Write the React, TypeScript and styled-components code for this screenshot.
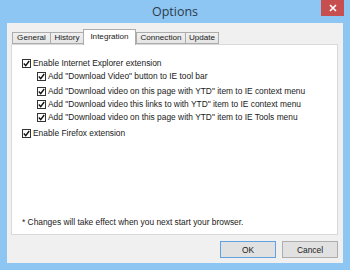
import React from 'react';
import styled, { createGlobalStyle } from 'styled-components';

const GlobalStyle = createGlobalStyle`
  html, body {
    margin: 0;
    padding: 0;
    background: #8ec6f3;
  }
`;

const Frame = styled.div`
  width: 350px;
  height: 270px;
  background: #8ec6f3;
  display: flex;
  flex-direction: column;
  font-family: 'Liberation Sans', Arial, sans-serif;
  font-size: 8.4px;
  color: #1a1a1a;
`;

const TitleBar = styled.div`
  height: 23px;
  flex: none;
  display: grid;
  grid-template-columns: 1fr auto 1fr;
  align-items: start;
`;

const Title = styled.div`
  grid-column: 2;
  font-family: 'Open Sans', 'Noto Sans', sans-serif;
  font-size: 12.5px;
  color: #2c3a4a;
  line-height: 24px;
`;

const CloseButton = styled.div`
  grid-column: 3;
  justify-self: end;
  margin-right: 6px;
  width: 23px;
  height: 16px;
  background: #c74f50;
  display: flex;
  align-items: center;
  justify-content: center;
`;

const Client = styled.div`
  margin: 0 7px;
  height: 240px;
  flex: none;
  background: #f0f0f0;
  padding: 6px 5px 0 4px;
  box-sizing: border-box;
  display: flex;
  flex-direction: column;
`;

const TabStrip = styled.div`
  height: 15px;
  flex: none;
  display: flex;
  align-items: flex-end;
  padding-left: 1px;
  position: relative;
  z-index: 1;
`;

const Tab = styled.div<{ $w: number; $active?: boolean }>`
  width: ${(p) => p.$w}px;
  height: ${(p) => (p.$active ? 16 : 12)}px;
  box-sizing: border-box;
  border: 1px solid #acacac;
  border-bottom: ${(p) => (p.$active ? 'none' : '1px solid #acacac')};
  margin-bottom: ${(p) => (p.$active ? -1 : 0)}px;
  margin-right: ${(p) => (p.$active ? 0 : -1)}px;
  background: ${(p) => (p.$active ? '#ffffff' : 'linear-gradient(#f0f0f0, #e5e5e5)')};
  display: flex;
  justify-content: center;
  align-items: ${(p) => (p.$active ? 'flex-start' : 'center')};
  padding-top: ${(p) => (p.$active ? 2 : 0)}px;
  font-size: 8.1px;
  line-height: 10px;
  white-space: nowrap;
`;

const Panel = styled.div`
  height: 191px;
  flex: none;
  box-sizing: border-box;
  background: #ffffff;
  border: 1px solid #d9d9d9;
  padding: 13px 0 0 10px;
  display: flex;
  flex-direction: column;
`;

const Row = styled.label<{ $indent?: boolean; $gap: number }>`
  display: flex;
  align-items: center;
  gap: 2px;
  margin-left: ${(p) => (p.$indent ? 15 : 0)}px;
  margin-bottom: ${(p) => p.$gap}px;
  height: 10px;
  white-space: nowrap;
`;

const Box = styled.span`
  width: 9px;
  height: 9px;
  box-sizing: border-box;
  border: 1px solid #333333;
  background: #ffffff;
  display: flex;
  align-items: center;
  justify-content: center;
  flex: none;
`;

const Note = styled.div`
  margin-top: auto;
  margin-bottom: 7px;
  white-space: nowrap;
`;

const ButtonRow = styled.div`
  display: flex;
  justify-content: flex-end;
  gap: 6px;
  margin-top: 6px;
`;

const Button = styled.div<{ $default?: boolean }>`
  width: 56px;
  height: 17px;
  box-sizing: border-box;
  border: 1px solid ${(p) => (p.$default ? '#5fa2e3' : '#adadad')};
  background: #e1e1e1;
  display: flex;
  align-items: center;
  justify-content: center;
`;

const Check = () => (
  <Box>
    <svg width="7" height="7" viewBox="0 0 7 7">
      <path d="M0.8 3.6 L2.7 5.6 L6.2 1" fill="none" stroke="#111" strokeWidth="1.4" />
    </svg>
  </Box>
);

const tabs = [
  { label: 'General', w: 39 },
  { label: 'History', w: 34 },
  { label: 'Integration', w: 53, active: true },
  { label: 'Connection', w: 50 },
  { label: 'Update', w: 34 },
];

const rows = [
  { text: 'Enable Internet Explorer extension', indent: false, gap: 3 },
  { text: 'Add "Download Video" button to IE tool bar', indent: true, gap: 5 },
  { text: 'Add "Download video on this page with YTD" item to IE context menu', indent: true, gap: 3 },
  { text: 'Add "Download video this links to with YTD" item to IE context menu', indent: true, gap: 3 },
  { text: 'Add "Download video on this page with YTD" item to IE Tools menu', indent: true, gap: 6 },
  { text: 'Enable Firefox extension', indent: false, gap: 0 },
];

export default function App() {
  return (
    <Frame>
      <GlobalStyle />
      <TitleBar>
        <Title>Options</Title>
        <CloseButton>
          <svg width="8" height="8" viewBox="0 0 8 8">
            <path d="M1 1 L7 7 M7 1 L1 7" stroke="#fff" strokeWidth="1.6" />
          </svg>
        </CloseButton>
      </TitleBar>
      <Client>
        <TabStrip>
          {tabs.map((t) => (
            <Tab key={t.label} $w={t.w} $active={t.active}>
              {t.label}
            </Tab>
          ))}
        </TabStrip>
        <Panel>
          {rows.map((r, i) => (
            <Row key={i} $indent={r.indent} $gap={r.gap}>
              <Check />
              <span>{r.text}</span>
            </Row>
          ))}
          <Note>* Changes will take effect when you next start your browser.</Note>
        </Panel>
        <ButtonRow>
          <Button $default>OK</Button>
          <Button>Cancel</Button>
        </ButtonRow>
      </Client>
    </Frame>
  );
}
